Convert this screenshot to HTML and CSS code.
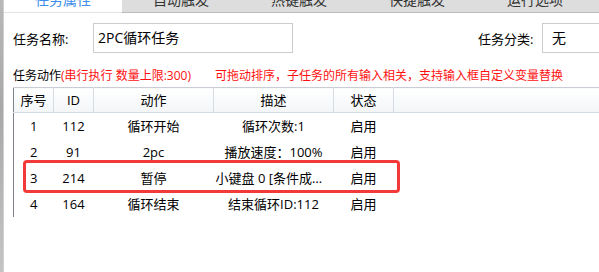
FILE: index.html
```html
<!DOCTYPE html>
<html lang="zh-CN">
<head>
    <meta charset="UTF-8">
    <title>任务属性</title>
    <link rel="stylesheet" href="styles.css">
</head>
<body>
    <div class="window">
        <div class="side-strip"></div>
        <div class="main">
            <ul class="tabs">
                <li class="active">任务属性</li>
                <li>自动触发</li>
                <li>热键触发</li>
                <li>快捷触发</li>
                <li>运行选项</li>
            </ul>

            <div class="panel">
                <div class="form-row">
                    <label class="name-label">任务名称:</label>
                    <div class="input name-input">2PC循环任务</div>
                    <label class="type-label">任务分类:</label>
                    <div class="input type-input">无</div>
                </div>

                <div class="actions-title">
                    任务动作<span class="red">(串行执行 数量上限:300)</span>
                    <span class="red hint">可拖动排序，子任务的所有输入相关，支持输入框自定义变量替换</span>
                </div>

                <div class="grid-wrap">
                    <table class="grid">
                        <colgroup>
                            <col class="c-no">
                            <col class="c-id">
                            <col class="c-act">
                            <col class="c-desc">
                            <col class="c-state">
                            <col>
                        </colgroup>
                        <thead>
                            <tr>
                                <th>序号</th>
                                <th>ID</th>
                                <th>动作</th>
                                <th>描述</th>
                                <th>状态</th>
                                <th class="filler"></th>
                            </tr>
                        </thead>
                        <tbody>
                            <tr>
                                <td>1</td>
                                <td>112</td>
                                <td>循环开始</td>
                                <td>循环次数:1</td>
                                <td>启用</td>
                                <td></td>
                            </tr>
                            <tr>
                                <td>2</td>
                                <td>91</td>
                                <td>2pc</td>
                                <td>播放速度：100%</td>
                                <td>启用</td>
                                <td></td>
                            </tr>
                            <tr>
                                <td>3</td>
                                <td>214</td>
                                <td>暂停</td>
                                <td>小键盘 0 [条件成立时继续执行]</td>
                                <td>启用</td>
                                <td></td>
                            </tr>
                            <tr>
                                <td>4</td>
                                <td>164</td>
                                <td>循环结束</td>
                                <td>结束循环ID:112</td>
                                <td>启用</td>
                                <td></td>
                            </tr>
                        </tbody>
                    </table>
                    <div class="highlight"></div>
                </div>
            </div>
        </div>
    </div>
</body>
</html>
```

FILE: styles.css
```css
html, body {
    margin: 0;
    padding: 0;
    background: #fff;
    overflow: hidden;
}
body {
    font-family: "Open Sans", "Noto Sans CJK SC", sans-serif;
    font-size: 13px;
    color: #000;
    width: 599px;
    height: 272px;
}
.window {
    display: flex;
    height: 272px;
}
.side-strip {
    width: 3px;
    flex: none;
    background: linear-gradient(#b8b8b8, #a8a8a8 40%, #c4c4c4);
}
.main {
    flex: 1;
    min-width: 0;
    border-left: 1px solid #d0d0d0;
    overflow: hidden;
}
.tabs {
    display: flex;
    margin: -12px 0 0 0;
    padding: 0;
    list-style: none;
    height: 24px;
    border-bottom: 1px solid #bcbcbc;
    background: #dddddd;
}
.tabs li {
    width: 118px;
    flex: none;
    text-align: center;
    line-height: 24px;
    font-size: 14px;
    color: #333;
}
.tabs li.active {
    background: #fff;
    color: #3c8ee8;
    border-bottom: 1px solid #e2e2e2;
    margin-bottom: -1px;
}
.panel {
    padding: 10px 0 0 9px;
}
.form-row {
    display: flex;
    align-items: center;
    height: 30px;
}
.form-row label {
    flex: none;
    white-space: nowrap;
    font-size: 13px;
}
.name-label {
    width: 80px;
}
.input {
    box-sizing: border-box;
    height: 30px;
    border: 1px solid #cccccc;
    line-height: 28px;
    padding-left: 4px;
    font-size: 14px;
    flex: none;
    white-space: nowrap;
}
.name-input {
    width: 200px;
}
.type-label {
    margin-left: 185px;
    width: 64px;
}
.type-input {
    width: 100px;
    padding-left: 9px;
}
.actions-title {
    margin-top: 12px;
    height: 21px;
    line-height: 21px;
    font-size: 12px;
    white-space: nowrap;
}
.red {
    color: #ff1010;
}
.hint {
    margin-left: 21px;
}
.grid-wrap {
    position: relative;
    margin-top: 1px;
}
.grid {
    width: 640px;
    table-layout: fixed;
    border-collapse: collapse;
    border-left: 1px solid #7f848c;
    border-top: 1px solid #c9cdd3;
}
.c-no { width: 40px; }
.c-id { width: 40px; }
.c-act { width: 120px; }
.c-desc { width: 120px; }
.c-state { width: 60px; }
.grid th {
    height: 24px;
    padding: 0;
    line-height: 20px;
    font-weight: normal;
    background: linear-gradient(#ffffff, #f3f5f7);
    border-right: 1px solid #d6dce3;
    border-bottom: 1px solid #d6dce3;
}
.grid th.filler {
    border-right: none;
}
.grid td {
    height: 26px;
    padding: 0 2px;
    line-height: 20px;
    text-align: center;
    white-space: nowrap;
    overflow: hidden;
    text-overflow: ellipsis;
}
.highlight {
    position: absolute;
    left: 10px;
    top: 73px;
    width: 371px;
    height: 27px;
    border: 3px solid #f23a3a;
    border-radius: 4px;
}
```
